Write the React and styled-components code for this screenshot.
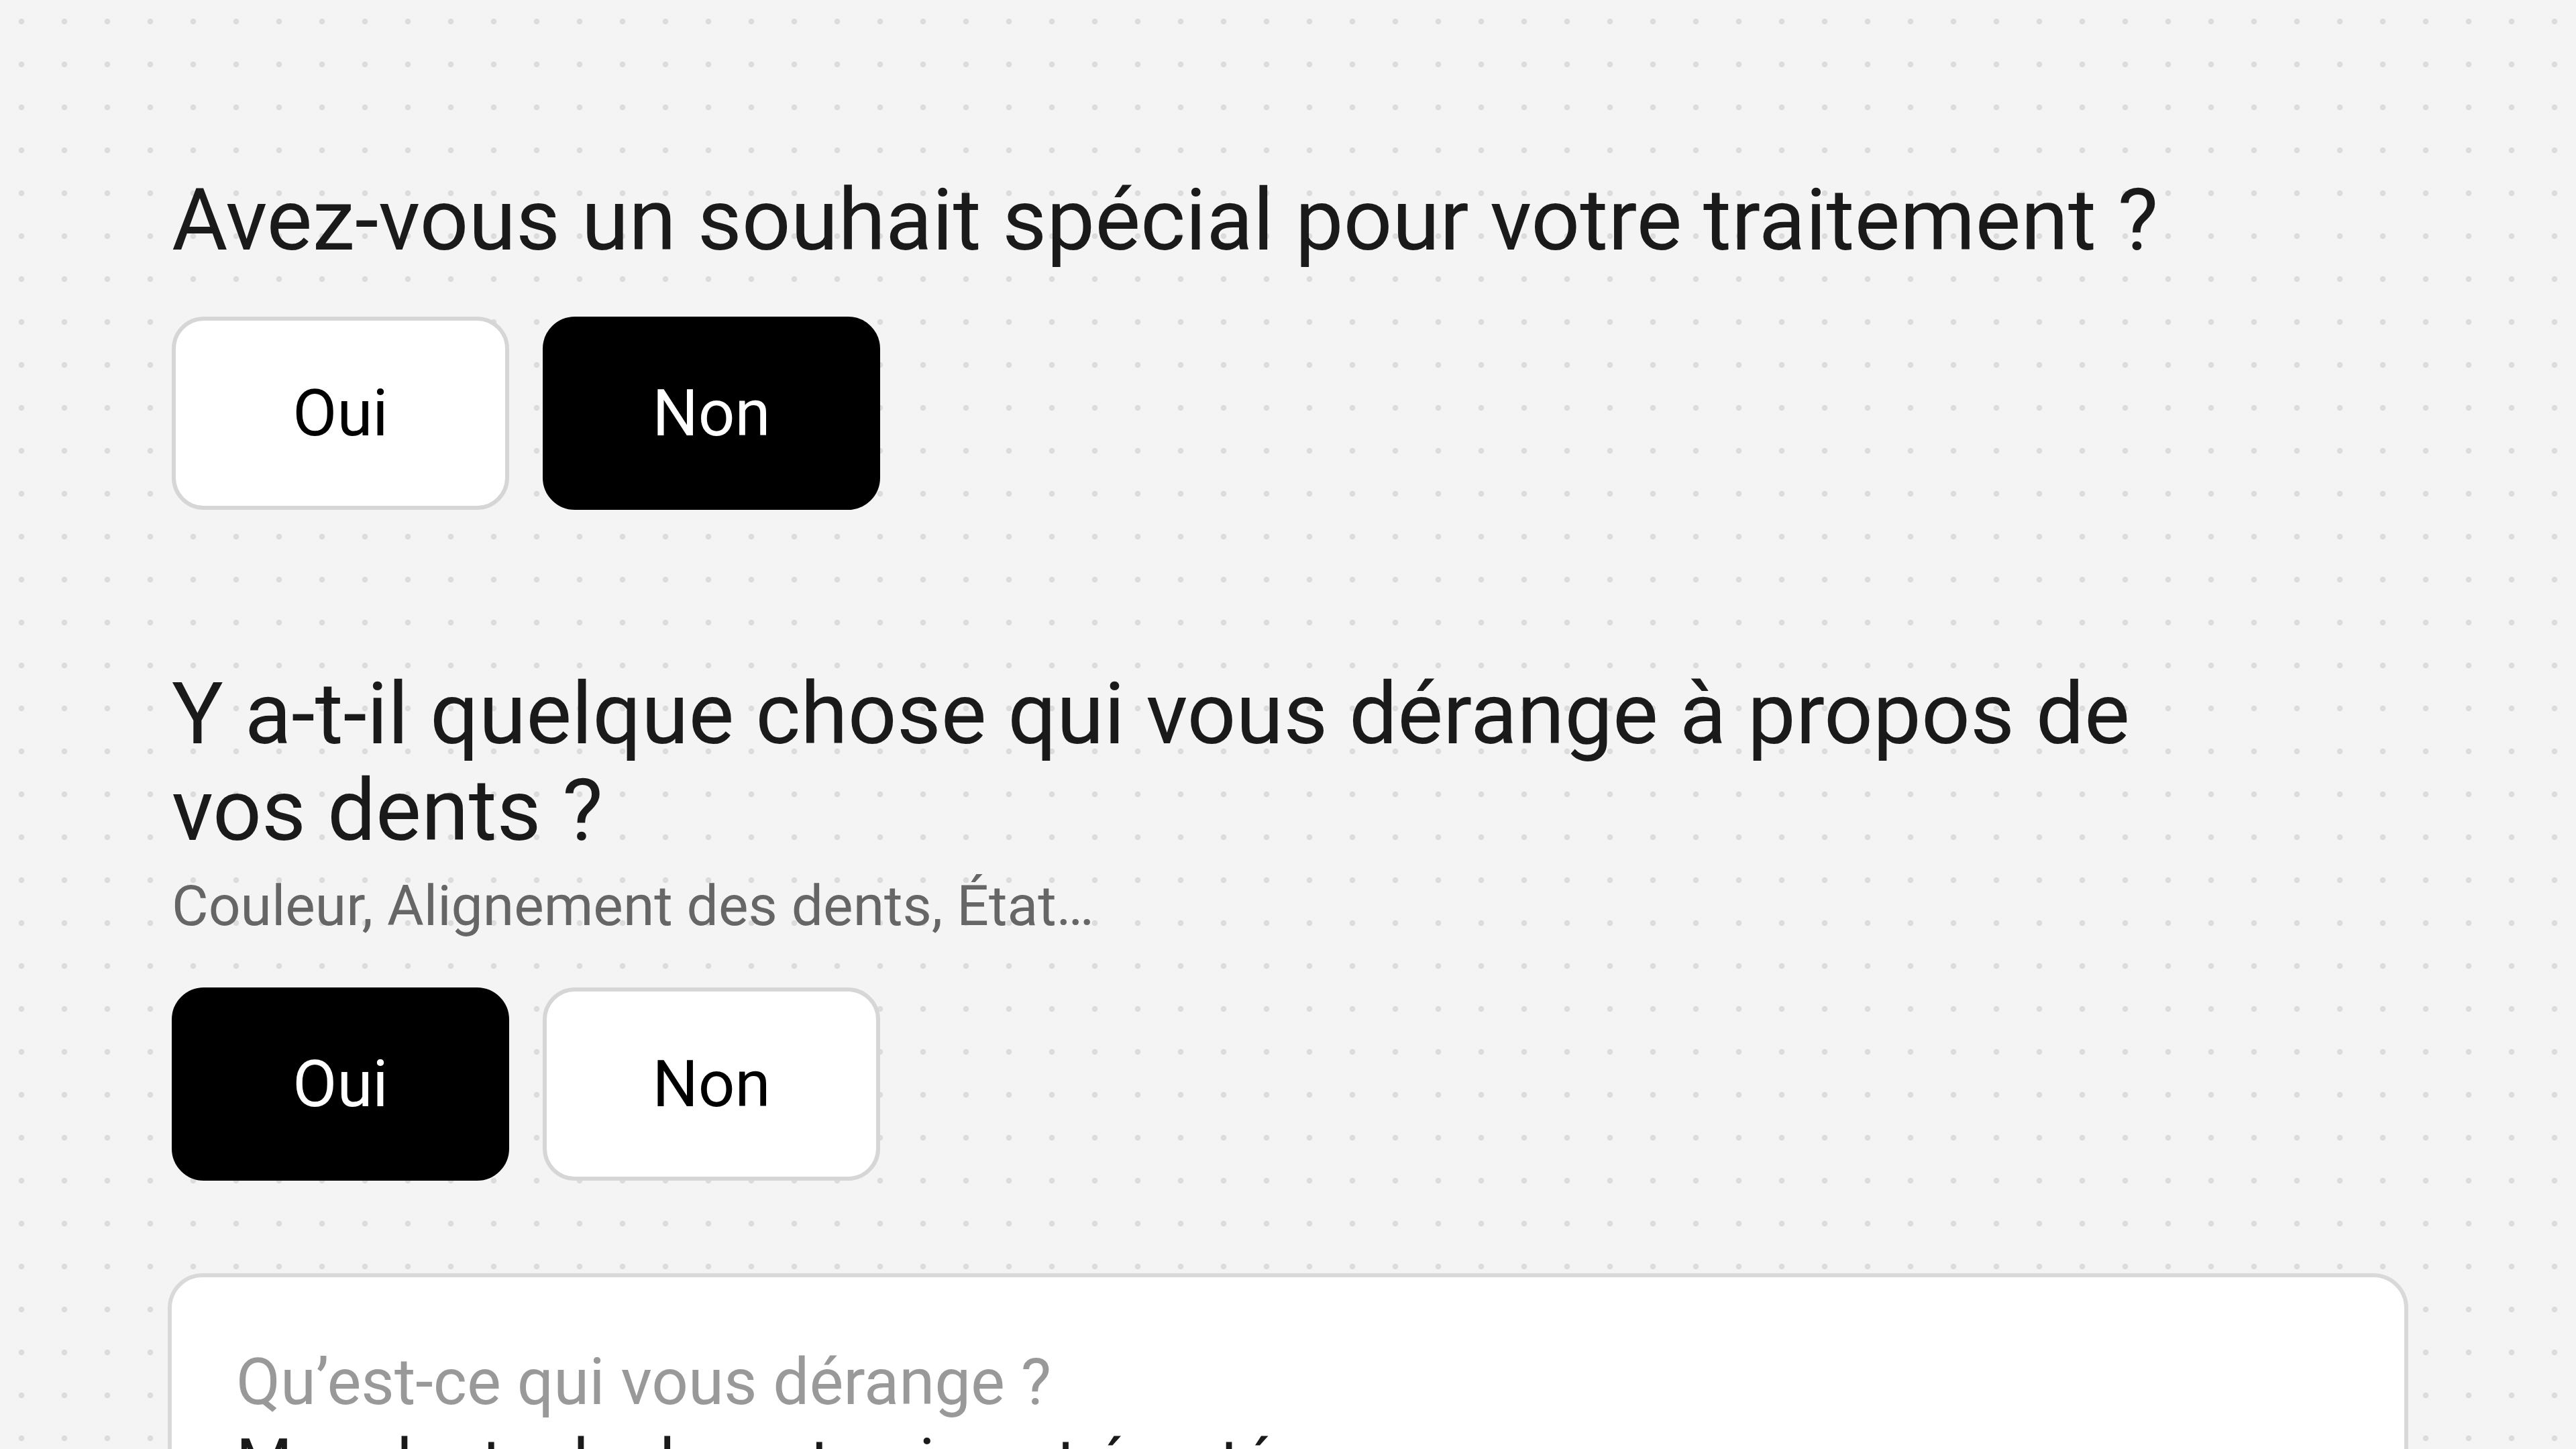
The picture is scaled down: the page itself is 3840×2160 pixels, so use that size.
import React from 'react'
import styled, { createGlobalStyle } from 'styled-components';

const GlobalStyle = createGlobalStyle`
    html, body {
        margin: 0;
        padding: 0;
    }
    body {
        min-height: 100vh;
        background-color: #f4f4f4;
        background-image: radial-gradient(circle, #dcdcdc 4px, transparent 4.6px);
        background-size: 64px 64px;
        font-family: Roboto, "Noto Sans", "Liberation Sans", sans-serif;
        color: #1a1a1a;
    }
`

function Choice({ value }) {
    return (
        <Choices>
            <ChoiceButton $active={value === 'oui'}>Oui</ChoiceButton>
            <ChoiceButton $active={value === 'non'}>Non</ChoiceButton>
        </Choices>
    )
}

function App() {
    return (
        <>
            <GlobalStyle />
            <Page>
                <Question>
                    <Title>Avez-vous un souhait spécial pour votre traitement ?</Title>
                    <Choice value="non" />
                </Question>

                <Question $spaced>
                    <Title>Y a-t-il quelque chose qui vous dérange à propos de vos dents ?</Title>
                    <Hint>Couleur, Alignement des dents, État…</Hint>
                    <Choice value="oui" />
                    <AnswerCard>
                        <AnswerLabel>Qu’est-ce qui vous dérange ?</AnswerLabel>
                        <AnswerText>Mes dents de devant qui sont écartées</AnswerText>
                    </AnswerCard>
                </Question>
            </Page>
        </>
    )
}

export default App

const Page = styled.main`
    width: 3328px;
    margin: 0 auto;
    padding: 256px 0;
    display: flex;
    flex-direction: column;
`;

const Question = styled.section`
    display: flex;
    flex-direction: column;
    margin-top: ${props => props.$spaced ? '232px' : '0'};
`;

const Title = styled.h2`
    margin: 0;
    max-width: 3000px;
    font-size: 128px;
    line-height: 144px;
    font-weight: 400;
    color: #1a1a1a;
`;

const Hint = styled.p`
    margin: 8px 0 0;
    font-size: 84px;
    line-height: 126px;
    color: #666666;
`;

const Choices = styled.div`
    display: flex;
    gap: 50px;
    margin-top: 72px;

    ${Hint} + & {
        margin-top: 58px;
    }
`;

const ChoiceButton = styled.button`
    width: 503px;
    height: 288px;
    box-sizing: border-box;
    border-radius: 48px;
    border: 6px solid ${props => props.$active ? '#000000' : '#d6d6d6'};
    background: ${props => props.$active ? '#000000' : '#ffffff'};
    color: ${props => props.$active ? '#ffffff' : '#000000'};
    font-family: Roboto, "Liberation Sans", sans-serif;
    font-size: 96px;
    font-weight: 400;
    display: flex;
    align-items: center;
    justify-content: center;
    cursor: pointer;
`;

const AnswerCard = styled.div`
    margin: 138px -6px 0;
    padding: 96px;
    background: #ffffff;
    border: 6px solid #d9d9d9;
    border-radius: 52px;
    display: flex;
    flex-direction: column;
`;

const AnswerLabel = styled.label`
    font-size: 96px;
    line-height: 120px;
    color: #999999;
`;

const AnswerText = styled.p`
    margin: 0;
    font-size: 96px;
    line-height: 120px;
    color: #1a1a1a;
`;
